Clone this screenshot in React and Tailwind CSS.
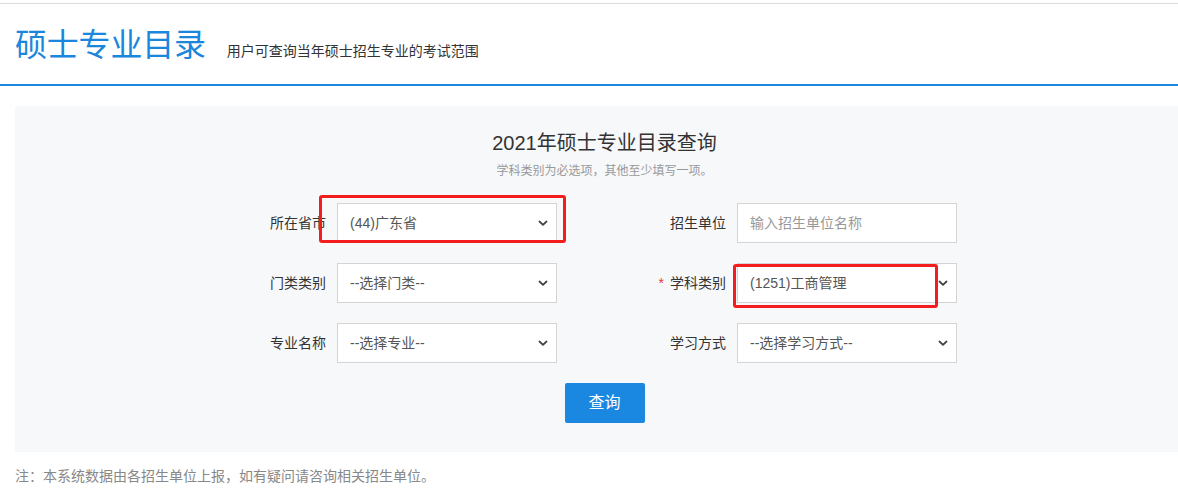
import React from 'react';

const FONT = { fontFamily: '"Liberation Sans", "Noto Sans CJK SC", sans-serif' };

function Chevron() {
  return (
    <svg width="10" height="7" viewBox="0 0 10 7" className="shrink-0">
      <path d="M1.5 1.5 L5 4.8 L8.5 1.5" fill="none" stroke="#444" strokeWidth="1.8" strokeLinecap="round" strokeLinejoin="round" />
    </svg>
  );
}

function SelectBox({ value }) {
  return (
    <div className="w-[220px] h-[40px] bg-white border border-[#d4d4d4] flex items-center justify-between pl-[12px] pr-[8px]">
      <span className="text-[14px] text-[#555]">{value}</span>
      <Chevron />
    </div>
  );
}

function InputBox({ placeholder }) {
  return (
    <div className="w-[220px] h-[40px] bg-white border border-[#d4d4d4] flex items-center pl-[12px]">
      <span className="text-[14px] text-[#999]">{placeholder}</span>
    </div>
  );
}

function Field({ label, required, children }) {
  return (
    <div className="flex items-center gap-[11px]">
      <div className="w-[100px] text-right text-[14px] text-[#333]">
        {required && <span className="text-[#e4393c] mr-[6px]">*</span>}
        {label}
      </div>
      {children}
    </div>
  );
}

export default function App() {
  return (
    <div className="relative w-[1178px] h-[489px] bg-white overflow-hidden" style={FONT}>
      {/* top rule */}
      <div className="mt-[3px] border-t border-[#dcdcdc]" />

      {/* Header */}
      <div className="h-[80px] flex items-center pl-[15px]">
        <div className="flex items-baseline gap-[21px] mt-[2px]">
          <h1 className="text-[32px] text-[#1a86dc] tracking-[-0.2px]">硕士专业目录</h1>
          <p className="text-[14px] text-[#333]">用户可查询当年硕士招生专业的考试范围</p>
        </div>
      </div>
      <div className="h-[2px] bg-[#1a88e0]" />

      {/* Query panel */}
      <div className="ml-[15px] mt-[20px] h-[346px] bg-[#f7f8fa] pt-[23px]">
        <div className="pl-[16px] text-center">
          <h2 className="text-[20px] leading-[28px] text-[#333]">2021年硕士专业目录查询</h2>
          <p className="mt-[5px] text-[12px] leading-[18px] text-[#999]">学科类别为必选项，其他至少填写一项。</p>
        </div>

        <div className="mt-[23px] ml-[211px] grid grid-cols-[331px_331px] gap-x-[69px] gap-y-[20px]">
          <Field label="所在省市"><SelectBox value="(44)广东省" /></Field>
          <Field label="招生单位"><InputBox placeholder="输入招生单位名称" /></Field>
          <Field label="门类类别"><SelectBox value="--选择门类--" /></Field>
          <Field label="学科类别" required><SelectBox value="(1251)工商管理" /></Field>
          <Field label="专业名称"><SelectBox value="--选择专业--" /></Field>
          <Field label="学习方式"><SelectBox value="--选择学习方式--" /></Field>
        </div>

        <div className="mt-[20px] pl-[16px] flex justify-center">
          <button className="w-[80px] h-[40px] rounded-[2px] bg-[#1a88e0] text-white text-[16px]">查询</button>
        </div>
      </div>

      <p className="ml-[15px] mt-[14px] text-[14px] leading-[20px] text-[#888]">注：本系统数据由各招生单位上报，如有疑问请咨询相关招生单位。</p>

      {/* annotation boxes */}
      <div className="absolute left-[319px] top-[195px] w-[247px] h-[48px] border-[3px] border-[#f41d1d] rounded-[3px]" />
      <div className="absolute left-[733px] top-[264px] w-[205px] h-[44px] border-[3px] border-[#f41d1d] rounded-[3px]" />
    </div>
  );
}
